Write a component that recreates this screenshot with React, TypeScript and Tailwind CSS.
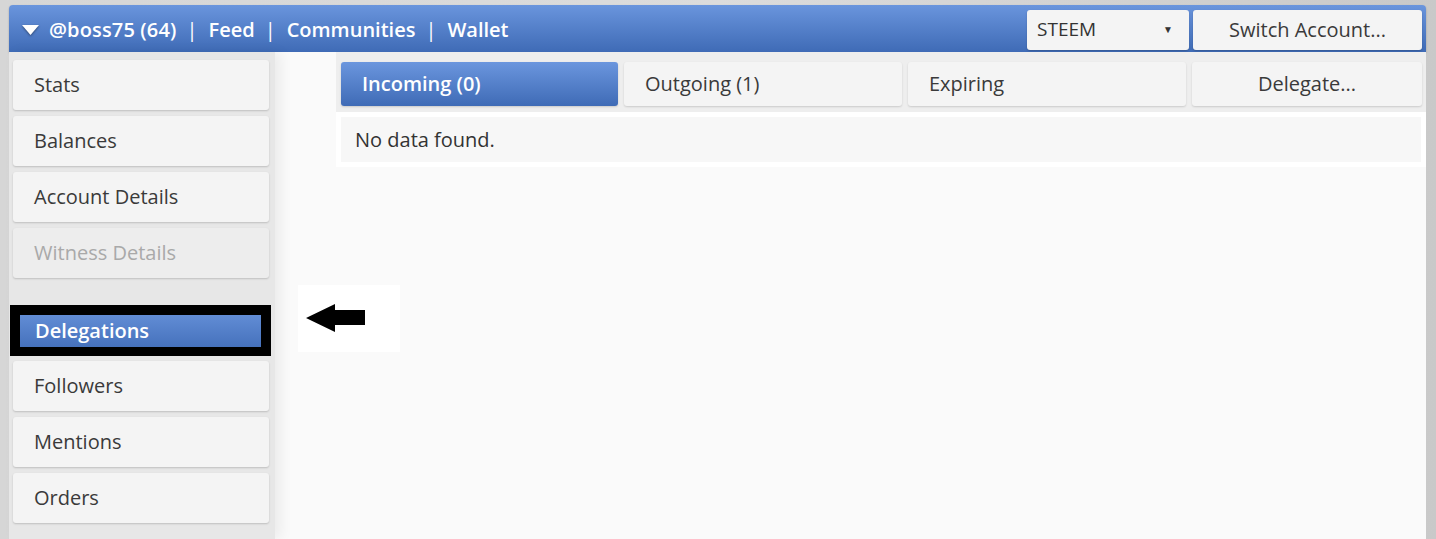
import React from "react";

const font = { fontFamily: '"Open Sans", "Noto Sans", sans-serif' };

function SideItem({ label, disabled }: { label: string; disabled?: boolean }) {
  return (
    <div
      className={`h-[50px] w-[256px] shrink-0 rounded-[3px] flex items-center pl-[21px] text-[20px] shadow-[0_1px_2px_rgba(0,0,0,0.18)] ${
        disabled ? "bg-[#ededed] text-[#a9a9a9]" : "bg-[#f4f4f4] text-[#3a3a3a]"
      }`}
    >
      {label}
    </div>
  );
}

function Tab({ label, active, center, w }: { label: string; active?: boolean; center?: boolean; w: string }) {
  return (
    <div
      className={`${w} shrink-0 h-[44px] rounded-[3px] flex items-center text-[20px] shadow-[0_1px_2px_rgba(0,0,0,0.15)] ${
        center ? "justify-center" : "pl-[21px]"
      } ${
        active
          ? "bg-gradient-to-b from-[#6b96de] to-[#3f6bb6] text-white font-semibold"
          : "bg-[#f4f4f4] text-[#3a3a3a]"
      }`}
    >
      {label}
    </div>
  );
}

export default function App() {
  return (
    <div
      className="w-[1436px] h-[539px] overflow-hidden bg-gradient-to-r from-[#d6d6d6] via-[#dcdcdc] to-[#c9c9c9] pt-[5px] pl-[9px]"
      style={font}
    >
      <div className="w-[1417px] h-[534px] flex flex-col">
        {/* top bar */}
        <div className="h-[47px] shrink-0 rounded-t-[4px] bg-gradient-to-b from-[#6a95dd] to-[#3f6bb6] flex items-center justify-between pl-[13px] pr-[4px] shadow-[0_1px_2px_rgba(0,0,0,0.25)]">
          <div className="flex items-center text-white font-semibold text-[20px] mt-[3px]">
            <svg width="17" height="11" viewBox="0 0 17 11" className="mr-[10px] drop-shadow-[0_1px_1px_rgba(0,0,0,0.45)]">
              <polygon points="0,0 17,0 8.5,10" fill="#ffffff" />
            </svg>
            <span className="tracking-[0.15px]">@boss75 (64)</span>
            <span className="ml-[10px] mr-[11px] font-normal">|</span>
            <span>Feed</span>
            <span className="ml-[10px] mr-[11px] font-normal">|</span>
            <span>Communities</span>
            <span className="ml-[10px] mr-[11px] font-normal">|</span>
            <span>Wallet</span>
          </div>
          <div className="flex items-center gap-[4px] mt-[2px]">
            <div className="w-[162px] h-[40px] rounded-[3px] bg-[#f4f4f4] flex items-center justify-between pl-[10px] pr-[16px] text-[19px] text-[#333] shadow-[0_1px_2px_rgba(0,0,0,0.2)]">
              <span>STEEM</span>
              <span className="text-[10px]">▼</span>
            </div>
            <div className="w-[229px] h-[40px] rounded-[3px] bg-[#f4f4f4] flex items-center justify-center text-[20px] text-[#3a3a3a] shadow-[0_1px_2px_rgba(0,0,0,0.2)]">
              Switch Account...
            </div>
          </div>
        </div>

        {/* body */}
        <div className="flex flex-1">
          <div className="w-[266px] shrink-0 bg-[#e7e7e7] pl-[4px] pt-[8px] flex flex-col gap-[6px] shadow-[6px_0_12px_rgba(0,0,0,0.06)] z-10">
            <SideItem label="Stats" />
            <SideItem label="Balances" />
            <SideItem label="Account Details" />
            <SideItem label="Witness Details" disabled />
            <div className="relative shrink-0 mt-[21px] h-[50px] w-[256px] rounded-[3px] bg-gradient-to-b from-[#6a95dd] to-[#3f6bb6] flex items-center pl-[22px] text-[20px] text-white font-semibold">
              <span className="relative z-10 mt-[1px]">Delegations</span>
              <div className="absolute left-[-3px] top-[0px] w-[261px] h-[51px] border-[10px] border-b-[9px] border-black" />
            </div>
            <SideItem label="Followers" />
            <SideItem label="Mentions" />
            <SideItem label="Orders" />
          </div>

          <div className="flex-1 min-w-0 bg-[#fafafa] relative pl-[61px]">
            <div className="flex flex-col">
              <div className="bg-[#eeeeee] pt-[10px] pb-[6px] pl-[5px] pr-[4px] flex gap-[6px]">
                <Tab w="w-[277px]" label="Incoming (0)" active />
                <Tab w="w-[278px]" label="Outgoing (1)" />
                <Tab w="w-[278px]" label="Expiring" />
                <Tab w="w-[230px]" label="Delegate..." center />
              </div>
              <div className="bg-white p-[5px]">
                <div className="h-[45px] bg-[#f7f7f7] flex items-center pl-[14px] text-[20px] text-[#333]">
                  No data found.
                </div>
              </div>
            </div>

            {/* annotation arrow */}
            <div className="absolute left-[23px] top-[233px] w-[102px] h-[67px] bg-white flex items-center pl-[8px]">
              <svg width="60" height="30" viewBox="0 0 60 30">
                <polygon points="0,14 29,0 29,6 59,6 59,21 29,21 29,28" fill="#000" />
              </svg>
            </div>
          </div>
        </div>
      </div>
    </div>
  );
}
